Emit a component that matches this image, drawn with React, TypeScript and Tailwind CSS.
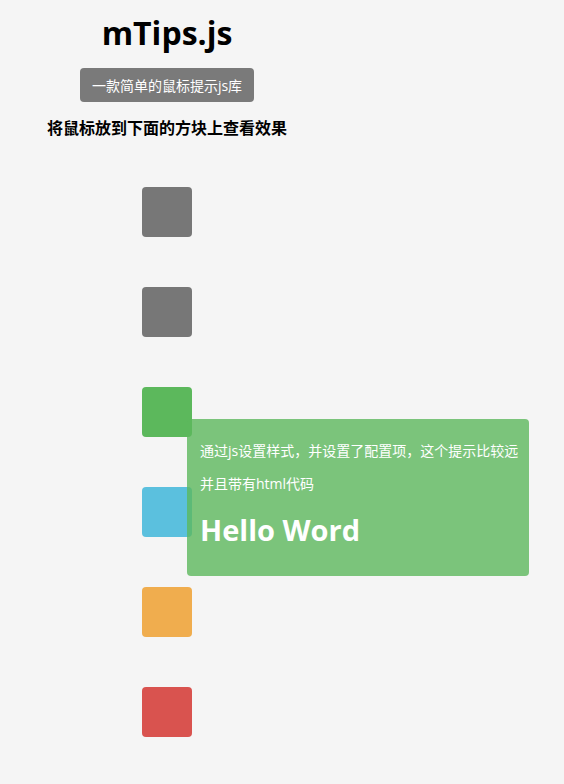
import React from "react";

const squares = [
  "bg-[#777777]",
  "bg-[#777777]",
  "bg-[#5cb85c]",
  "bg-[#5bc0de]",
  "bg-[#f0ad4e]",
  "bg-[#d9534f]",
];

export default function App() {
  return (
    <div
      className="relative min-h-[784px] w-full bg-[#f5f5f5] text-black"
      style={{ fontFamily: '"Open Sans", "Noto Sans CJK SC", sans-serif' }}
    >
      <div className="flex w-[334px] flex-col items-center">
        <h1 className="mt-[13px] text-[32px] font-bold leading-[40px]">mTips.js</h1>
        <div className="mt-[15px] flex h-[34px] items-center rounded-[4px] bg-[#7a7a7a] px-[12px] text-[14px] text-white">
          一款简单的鼠标提示js库
        </div>
        <div className="mt-[14px] text-[16px] font-bold leading-[24px]">将鼠标放到下面的方块上查看效果</div>
        <div className="mt-[47px] flex flex-col gap-[50px]">
          {squares.map((c, i) => (
            <div key={i} className={`h-[50px] w-[50px] rounded-[4px] ${c}`} />
          ))}
        </div>
      </div>
      <div className="absolute left-[187px] top-[419px] h-[157px] w-[342px] rounded-[4px] bg-[#5cb85c]/80 pl-[13px] pt-[22px] text-white">
        <p className="whitespace-nowrap text-[14px] leading-[20px]">通过js设置样式，并设置了配置项，这个提示比较远</p>
        <p className="mt-[13px] whitespace-nowrap text-[14px] leading-[20px]">并且带有html代码</p>
        <h2 className="mt-[18px] text-[29px] font-bold leading-[36px]">Hello Word</h2>
      </div>
    </div>
  );
}
